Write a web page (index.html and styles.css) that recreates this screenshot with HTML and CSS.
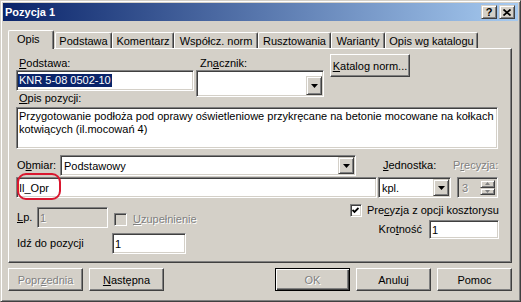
FILE: index.html
```html
<!doctype html>
<html>
    <head>
        <meta charset="utf-8">
        <title>Pozycja 1</title>
        <link rel="stylesheet" href="styles.css">
    </head>
    <body>
        <div class="window">
            <div class="caption">
                <span class="caption-text">Pozycja 1</span>
                <div class="caption-buttons">
                    <span class="cap-btn">?</span>
                    <span class="cap-btn">
                        <svg width="8" height="7" viewBox="0 0 8 7"><path d="M0.5 0.5 L7.5 6.5 M7.5 0.5 L0.5 6.5" stroke="#000" stroke-width="1.7"/></svg>
                    </span>
                </div>
            </div>

            <div class="client">
                <div class="tabs">
                    <div class="tab active t-opis">Opis</div>
                    <div class="tab t-podstawa">Podstawa</div>
                    <div class="tab t-komentarz">Komentarz</div>
                    <div class="tab t-wspolcz">Współcz. norm</div>
                    <div class="tab t-rusztowania">Rusztowania</div>
                    <div class="tab t-warianty">Warianty</div>
                    <div class="tab t-katalog">Opis wg katalogu</div>
                </div>

                <div class="panel">
                    <div class="row-top">
                        <div class="field f-podstawa">
                            <label class="lbl"><u>P</u>odstawa:</label>
                            <div class="edit sunken"><span class="sel">KNR 5-08 0502-10</span></div>
                        </div>
                        <div class="field f-znacznik">
                            <label class="lbl">Zn<u>a</u>cznik:</label>
                            <div class="combo combo-tall sunken">
                                <span class="val"></span>
                                <span class="drop"><svg width="7" height="4" viewBox="0 0 7 4"><path d="M0 0 H7 L3.5 4 Z" fill="#000"/></svg></span>
                            </div>
                        </div>
                        <button class="btn btn-katalog"><u>K</u>atalog norm...</button>
                    </div>

                    <label class="lbl lbl-opis"><u>O</u>pis pozycji:</label>
                    <div class="memo sunken">Przygotowanie podłoża pod oprawy oświetleniowe przykręcane na betonie mocowane na kołkach<br>kotwiących (il.mocowań 4)</div>

                    <div class="row-obmiar">
                        <label class="lbl lbl-obmiar">O<u>b</u>miar:</label>
                        <div class="combo sunken c-obmiar">
                            <span class="val">Podstawowy</span>
                            <span class="drop"><svg width="7" height="4" viewBox="0 0 7 4"><path d="M0 0 H7 L3.5 4 Z" fill="#000"/></svg></span>
                        </div>
                        <label class="lbl lbl-jedn"><u>J</u>ednostka:</label>
                        <label class="lbl disabled">P<u>r</u>ecyzja:</label>
                    </div>

                    <div class="row-opr">
                        <div class="edit sunken e-opr">Il_Opr</div>
                        <div class="combo sunken c-jedn">
                            <span class="val">kpl.</span>
                            <span class="drop"><svg width="7" height="4" viewBox="0 0 7 4"><path d="M0 0 H7 L3.5 4 Z" fill="#000"/></svg></span>
                        </div>
                        <div class="spin sunken">
                            <span class="val disabled">3</span>
                            <span class="spin-btns">
                                <span class="spin-btn"><svg width="5" height="3" viewBox="0 0 5 3"><path d="M0 3 H5 L2.5 0 Z" fill="#808080"/></svg></span>
                                <span class="spin-btn"><svg width="5" height="3" viewBox="0 0 5 3"><path d="M0 0 H5 L2.5 3 Z" fill="#808080"/></svg></span>
                            </span>
                        </div>
                        <span class="mark"></span>
                    </div>

                    <div class="row-bottom">
                        <div class="col-left">
                            <div class="row-lp">
                                <label class="lbl lbl-lp"><u>L</u>p.</label>
                                <div class="edit sunken e-lp"><span class="disabled">1</span></div>
                                <span class="check check-off"></span>
                                <label class="lbl lbl-uzup disabled"><u>U</u>zupełnienie</label>
                            </div>
                            <div class="row-idz">
                                <label class="lbl lbl-idz">Idź do pozycji</label>
                                <div class="edit sunken e-idz">1</div>
                            </div>
                        </div>
                        <div class="col-right">
                            <div class="row-check">
                                <span class="check"><svg width="7" height="7" viewBox="0 0 7 7"><path d="M0.5 3 L2.5 5 L6.5 1" stroke="#000" stroke-width="1.8" fill="none"/></svg></span>
                                <label class="lbl">Pre<u>c</u>yzja z opcji kosztorysu</label>
                            </div>
                            <div class="row-krot">
                                <label class="lbl">Kro<u>t</u>ność</label>
                                <div class="edit sunken e-krot">1</div>
                            </div>
                        </div>
                    </div>
                </div>

                <div class="buttons">
                    <div class="btn-group">
                        <button class="btn disabled">Popr<u>z</u>ednia</button>
                        <button class="btn"><u>N</u>astępna</button>
                    </div>
                    <div class="btn-group">
                        <button class="btn btn-default disabled">OK</button>
                        <button class="btn">Anuluj</button>
                        <button class="btn">Pomoc</button>
                    </div>
                </div>
            </div>
        </div>
    </body>
</html>
```

FILE: styles.css
```css
* {
    box-sizing: border-box;
}

body {
    margin: 0;
    background: #d4d0c8;
    font-family: "Liberation Sans", Arial, sans-serif;
    font-size: 11px;
    color: #000;
}

u {
    text-decoration: underline;
}

.window {
    width: 521px;
    height: 302px;
    background: #d4d0c8;
    border: 1px solid;
    border-color: #d4d0c8 #404040 #404040 #d4d0c8;
    box-shadow: inset 1px 1px #fff, inset -1px -1px #808080;
    padding: 2px;
}

/* title bar */
.caption {
    height: 18px;
    display: flex;
    align-items: center;
    justify-content: space-between;
    padding: 0 3px 0 2px;
    background: linear-gradient(to right, #0a246a, #a6caf0);
}

.caption-text {
    color: #fff;
    font-weight: bold;
    font-size: 11px;
}

.caption-buttons {
    display: flex;
    gap: 2px;
}

.cap-btn {
    width: 16px;
    height: 14px;
    display: flex;
    align-items: center;
    justify-content: center;
    background: #d4d0c8;
    border: 1px solid;
    border-color: #d4d0c8 #404040 #404040 #d4d0c8;
    box-shadow: inset 1px 1px #fff, inset -1px -1px #808080;
    font-weight: bold;
    font-size: 11px;
    line-height: 12px;
}

/* dialog body */
.client {
    padding: 9px 6px 0 5px;
}

.tabs {
    display: flex;
    align-items: flex-end;
    position: relative;
    z-index: 1;
}

.tab {
    height: 16px;
    border: 1px solid;
    border-bottom: 0;
    border-color: #fff #404040 #404040 #fff;
    border-radius: 2px 2px 0 0;
    box-shadow: inset -1px 0 #808080;
    background: #d4d0c8;
    text-align: center;
    line-height: 13px;
    padding-top: 2px;
    white-space: nowrap;
}

.tab.active {
    height: 19px;
    margin-bottom: -1px;
    margin-right: 1px;
    text-align: left;
    padding-left: 8px;
}

.t-opis { width: 46px; }
.t-podstawa { width: 57px; }
.t-komentarz { width: 62px; }
.t-wspolcz { width: 84px; }
.t-rusztowania { width: 73px; }
.t-warianty { width: 54px; }
.t-katalog { width: 93px; }

.panel {
    width: 504px;
    height: 215px;
    border: 1px solid;
    border-color: #fff #404040 #404040 #fff;
    box-shadow: inset -1px -1px #808080;
    padding: 5px 12px 0 7px;
}

.lbl {
    display: block;
    line-height: 13px;
    white-space: nowrap;
}

.disabled {
    color: #808080;
    text-shadow: 1px 1px #fff;
}

.sunken {
    border: 1px solid;
    border-color: #808080 #fff #fff #808080;
    box-shadow: inset 1px 1px #404040, inset -1px -1px #d4d0c8;
    background: #fff;
}

.edit {
    height: 21px;
    display: flex;
    align-items: center;
    padding: 0 2px;
    white-space: nowrap;
}

.sel {
    background: #0a246a;
    color: #fff;
    line-height: 13px;
    padding: 0 1px;
    margin-left: -1px;
}

.combo {
    height: 21px;
    display: flex;
    align-items: center;
    padding: 1px;
}

.combo .val {
    flex: 1;
    padding-left: 2px;
}

.drop {
    width: 16px;
    height: 17px;
    display: flex;
    align-items: center;
    justify-content: center;
    background: #d4d0c8;
    border: 1px solid;
    border-color: #d4d0c8 #404040 #404040 #d4d0c8;
    box-shadow: inset 1px 1px #fff, inset -1px -1px #808080;
}

.btn {
    width: 75px;
    height: 23px;
    padding: 0;
    background: #d4d0c8;
    border: 1px solid;
    border-color: #fff #404040 #404040 #fff;
    box-shadow: inset -1px -1px #808080;
    font-family: "Liberation Sans", Arial, sans-serif;
    font-size: 11px;
    color: #000;
}

.btn.disabled {
    color: #808080;
}

.btn-default {
    border-color: #000;
    box-shadow: inset 1px 1px #fff, inset -1px -1px #404040, inset -2px -2px #808080;
}

/* first row: Podstawa, Znacznik, Katalog */
.row-top {
    display: flex;
    align-items: flex-start;
    height: 38px;
}

.field {
    margin-top: 3px;
}

.f-podstawa {
    width: 178px;
}

.f-podstawa .lbl {
    padding-left: 3px;
}

.f-znacznik {
    width: 128px;
    margin-left: 2px;
}

.f-znacznik .lbl {
    padding-left: 4px;
}

.combo-tall {
    height: 27px;
    align-items: flex-end;
    padding: 2px 1px 1px 1px;
}

.combo-tall .drop {
    height: 19px;
}

.btn-katalog {
    width: 80px;
    margin-left: 6px;
}

.lbl-opis {
    padding-left: 3px;
}

.memo {
    margin-top: 2px;
    height: 42px;
    width: 482px;
    padding: 2px 1px 0 2px;
    line-height: 13px;
    white-space: nowrap;
}

/* Obmiar row */
.row-obmiar {
    display: flex;
    align-items: center;
    margin-top: 6px;
    height: 21px;
}

.lbl-obmiar {
    width: 44px;
    padding-left: 1px;
}

.c-obmiar {
    width: 296px;
}

.lbl-jedn {
    width: 70px;
    margin-left: 27px;
}

/* Il_Opr row */
.row-opr {
    display: flex;
    margin-top: 1px;
    height: 21px;
    position: relative;
}

.e-opr {
    width: 361px;
}

.c-jedn {
    width: 73px;
    margin-left: 1px;
}

.spin {
    width: 41px;
    height: 21px;
    margin-left: 6px;
    display: flex;
    padding: 2px;
    background: #d4d0c8;
}

.spin .val {
    flex: 1;
    padding-left: 2px;
    line-height: 17px;
}

.spin-btns {
    display: flex;
    flex-direction: column;
    width: 15px;
}

.spin-btn {
    flex: 1;
    display: flex;
    align-items: center;
    justify-content: center;
    background: #d4d0c8;
    border: 1px solid;
    border-color: #d4d0c8 #404040 #404040 #d4d0c8;
    box-shadow: inset 1px 1px #fff, inset -1px -1px #808080;
}

.mark {
    position: absolute;
    left: 1px;
    top: -4px;
    width: 44px;
    height: 27px;
    border: 2px solid #d9172f;
    border-radius: 9px;
}

/* bottom part of the panel */
.row-bottom {
    display: flex;
    justify-content: space-between;
    margin-top: 6px;
}

.row-lp {
    display: flex;
    align-items: flex-start;
    margin-top: 3px;
}

.lbl-lp {
    width: 21px;
    padding-left: 1px;
    margin-top: 4px;
}

.e-lp {
    width: 71px;
    background: #d4d0c8;
}

.check {
    width: 13px;
    height: 13px;
    display: flex;
    align-items: center;
    justify-content: center;
    border: 1px solid;
    border-color: #808080 #fff #fff #808080;
    box-shadow: inset 1px 1px #404040, inset -1px -1px #d4d0c8;
    background: #fff;
}

.check-off {
    background: #d4d0c8;
    margin: 6px 0 0 6px;
}

.lbl-uzup {
    margin: 6px 0 0 6px;
}

.row-idz {
    display: flex;
    align-items: flex-start;
    margin-top: 5px;
}

.lbl-idz {
    width: 96px;
    padding-left: 1px;
    margin-top: 4px;
}

.e-idz {
    width: 74px;
}

.col-right {
    width: 149px;
}

.row-check {
    display: flex;
    align-items: center;
    gap: 5px;
}

.row-krot {
    display: flex;
    align-items: center;
    justify-content: flex-end;
    gap: 7px;
    margin-top: 3px;
}

.e-krot {
    width: 70px;
    height: 19px;
}

/* dialog buttons */
.buttons {
    display: flex;
    justify-content: space-between;
    margin-top: 5px;
}

.btn-group {
    display: flex;
    gap: 6px;
}
```
